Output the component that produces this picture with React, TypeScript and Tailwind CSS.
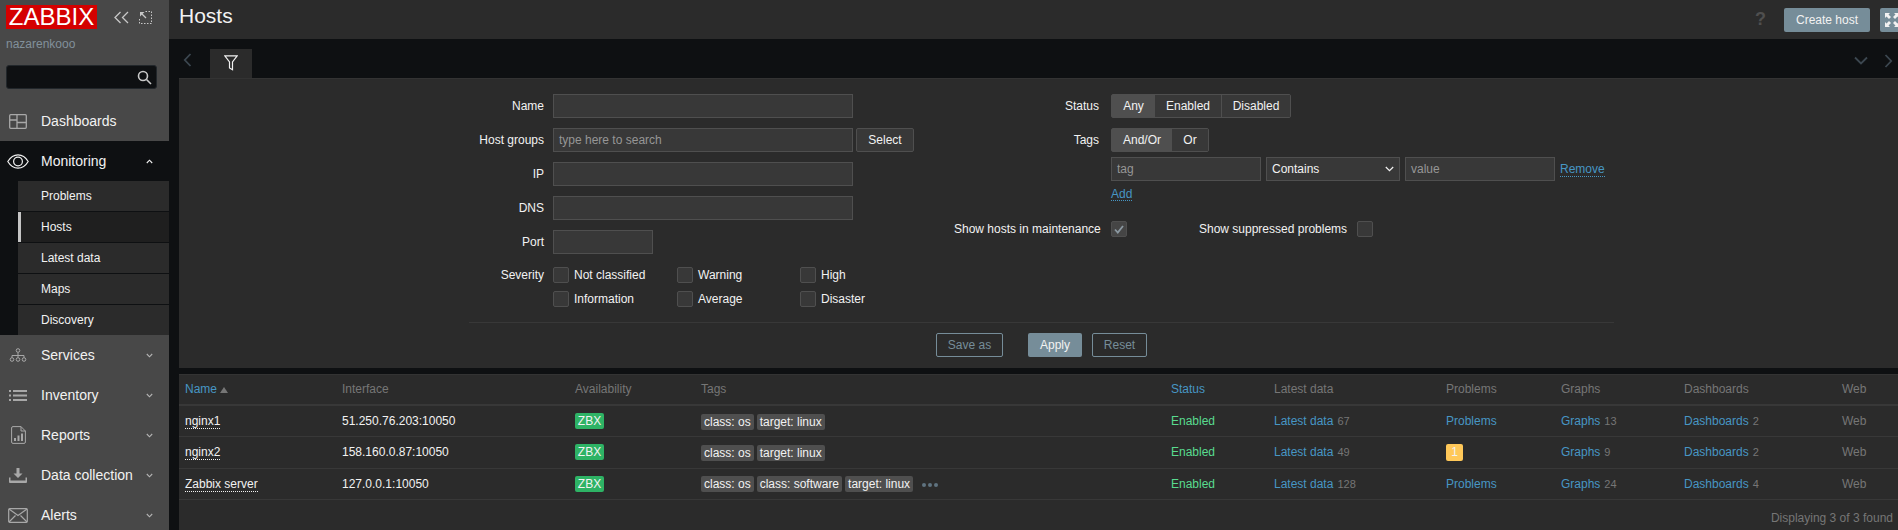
import React from "react";

const c = "#a8a8a8";

const Dash = () => (
  <svg width="18" height="15" viewBox="0 0 18 15" fill="none" stroke={c} strokeWidth="1.300"><rect x="0.700" y="0.700" width="16.600" height="13.600" rx="1" /><path d="M8 .7v13.600M.7 6h7.300M8 8.500h9.300" /></svg>
);
const Eye = () => (
  <svg width="22" height="15" viewBox="0 0 22 15" fill="none" stroke="#f2f2f2" strokeWidth="1.200"><path d="M.8 7.500C3.500 3 7 .8 11 .8s7.500 2.200 10.200 6.700C18.500 12 15 14.200 11 14.200S3.500 12 .8 7.500Z" /><circle cx="11" cy="7.500" r="4.400" /></svg>
);
const Services = () => (
  <svg width="18" height="14" viewBox="0 0 18 14" fill="none" stroke={c} strokeWidth="1"><circle cx="9" cy="2.500" r="1.800" /><path d="M9 4.500v3M3 9.500V7.500h12v2M9 7.500v2" /><circle cx="3" cy="11.500" r="1.800" /><circle cx="9" cy="11.500" r="1.800" /><circle cx="15" cy="11.500" r="1.800" /></svg>
);
const Inventory = () => (
  <svg width="18" height="11" viewBox="0 0 18 11" fill={c}><rect x="0" y="0" width="2" height="2" /><rect x="4" y="0" width="14" height="2" /><rect x="0" y="4.500" width="2" height="2" /><rect x="4" y="4.500" width="14" height="2" /><rect x="0" y="9" width="2" height="2" /><rect x="4" y="9" width="14" height="2" /></svg>
);
const Reports = () => (
  <svg width="15" height="18" viewBox="0 0 15 18" fill="none" stroke={c} strokeWidth="1"><path d="M2 .6h8l4.400 4.400V16a1.400 1.400 0 0 1-1.400 1.400H2A1.400 1.400 0 0 1 .6 16V2A1.400 1.400 0 0 1 2 .6Z" /><path d="M10 .6V5h4.400" /><path d="M3 15v-3h2v3ZM6.500 15V9.500h2V15ZM10 15V7.500h2V15Z" fill={c} stroke="none" /></svg>
);
const DataCol = () => (
  <svg width="18" height="15" viewBox="0 0 18 15" fill={c}><path d="M7.500 0h3v5.500h3L9 10 4.500 5.500h3Z" /><path d="M0 9.500h1.500v3h15v-3H18V14a1 1 0 0 1-1 1H1a1 1 0 0 1-1-1Z" /></svg>
);
const Alerts = () => (
  <svg width="20" height="15" viewBox="0 0 20 15" fill="none" stroke={c} strokeWidth="1.200"><rect x="0.700" y="0.700" width="18.600" height="13.600" rx="1" /><path d="M1 1l9 6.500L19 1M1 14l6.500-6.500M19 14l-6.500-6.500" /></svg>
);
const Chev = ({ up }: { up?: boolean }) => (
  <svg width="7" height="5" viewBox="0 0 7 5" fill="none" stroke={up ? "#f2f2f2" : "#b5b5b5"} strokeWidth="1.100"><path d={up ? "M.8 4 3.500 1.200 6.200 4" : "M.8 1 3.500 3.800 6.200 1"} /></svg>
);

const Main = ({ icon, label, open }: { icon: React.ReactNode; label: string; open?: boolean }) => (
  <div className={`h-10 shrink-0 flex items-center text-[14px] text-[#f2f2f2] ${open ? "bg-[#0e1012]" : ""}`}>
    <span className="w-[41px] pr-[5px] flex justify-center shrink-0">{icon}</span>
    <span className="flex-1">{label}</span>
    {label !== "Dashboards" && <span className="w-[17px] pr-[5px] flex justify-center mt-[1px] shrink-0 mr-[9px]"><Chev up={open} /></span>}
  </div>
);

const Sub = ({ label, active }: { label: string; active?: boolean }) => (
  <div className={`h-[30px] ml-[18px] flex items-center text-[12px] text-[#f2f2f2] ${active ? "bg-[#1f1f1f] border-l-[3px] border-[#c5c5c5] pl-[20px]" : "bg-[#2b2b2b] pl-[23px]"}`}>{label}</div>
);

const Sidebar = () => (
  <aside className="w-[169px] h-[530px] shrink-0 bg-[#484848] flex flex-col overflow-hidden">
    <div className="shrink-0 flex items-center pt-[5px] pl-[6px] h-[24px] box-content">
      <div className="w-[91px] h-6 bg-[#d40000] text-white text-[24px] leading-6 text-center font-normal">ZABBIX</div>
      <svg className="ml-[17px]" width="15" height="13" viewBox="0 0 15 13" fill="none" stroke="#c8c8c8" strokeWidth="1.300"><path d="M6.500 1 1 6.500 6.500 12M14 1 8.500 6.500 14 12" /></svg>
      <svg className="ml-[10px]" width="13" height="13" viewBox="0 0 13 13" fill="none" stroke="#c8c8c8"><path d="M6.500.5h6v12H.5V6.500" strokeDasharray="1.500 1.500" /><path d="M1 1h4.500L1 5.500Z" fill="#c8c8c8" stroke="none" /><path d="M3 3l4 4" strokeWidth="1.300" /></svg>
    </div>
    <div className="shrink-0 pl-[6px] mt-[8px] h-[14px] text-[12px] leading-[14px] text-[#82909b]">nazarenkooo</div>
    <div className="shrink-0 mx-[6px] mt-[14px] h-6 w-[151px] rounded-[3px] bg-[#0e1012] border border-[#22272b] flex items-center justify-end pr-[4px]">
      <svg width="15" height="15" viewBox="0 0 15 15" fill="none" stroke="#c8c8c8" strokeWidth="1.600"><circle cx="6" cy="6" r="4.500" /><path d="m9.500 9.500 4.500 4.500" /></svg>
    </div>
    <div className="shrink-0 mt-[12px]">
      <Main icon={<Dash />} label="Dashboards" />
      <Main icon={<Eye />} label="Monitoring" open />
      <div className="bg-[#0e1012] flex flex-col gap-[1px]">
        <Sub label="Problems" />
        <Sub label="Hosts" active />
        <Sub label="Latest data" />
        <Sub label="Maps" />
        <Sub label="Discovery" />
      </div>
      <Main icon={<Services />} label="Services" />
      <Main icon={<Inventory />} label="Inventory" />
      <Main icon={<Reports />} label="Reports" />
      <Main icon={<DataCol />} label="Data collection" />
      <Main icon={<Alerts />} label="Alerts" />
    </div>
  </aside>
);

const inputCls = "h-6 bg-[#383838] border border-[#4f4f4f] text-[12px] px-[5px] flex items-center shrink-0";

const Row = ({ label, children, h = "h-6" }: { label: string; children?: React.ReactNode; h?: string }) => (
  <div className={`flex items-center ${h}`}>
    <div className="w-[374px] text-right text-[12px] pr-[9px] text-[#f2f2f2] shrink-0">{label}</div>
    {children}
  </div>
);

const Check = ({ checked }: { checked?: boolean }) => (
  <span className={`w-4 h-4 shrink-0 rounded-[2px] border border-[#4f4f4f] flex items-center justify-center ${checked ? "bg-[#454545]" : "bg-[#383838]"}`}>
    {checked && <svg width="10" height="9" viewBox="0 0 10 9" fill="none" stroke="#8b98a1" strokeWidth="1.800"><path d="M1 4.500 3.800 7.500 9 1" /></svg>}
  </span>
);

const Sev = ({ label, w }: { label: string; w: string }) => (
  <span className={`flex items-center gap-[5px] text-[12px] ${w}`}><Check />{label}</span>
);

const Seg = ({ items, widths }: { items: string[]; widths: string[] }) => (
  <div className="flex h-6 border border-[#4f4f4f] rounded-[2px] text-[12px] text-[#f2f2f2]">
    {items.map((t, i) => (
      <span key={t} className={`flex items-center justify-center ${widths[i]} ${i === 0 ? "bg-[#4f4f4f]" : "bg-[#383838]"} ${i > 1 ? "border-l border-[#4f4f4f]" : ""}`}>{t}</span>
    ))}
  </div>
);

const Dotted = ({ children, className = "" }: { children: React.ReactNode; className?: string }) => (
  <span className={`border-b border-dotted leading-[14px] ${className}`}>{children}</span>
);

const FilterPanel = () => (
  <section className="ml-[10px] h-[290px] bg-[#2b2b2b] border-t border-[#333] pt-[15px] text-[#f2f2f2]">
    <div className="flex h-[228px]">
      <div className="w-[775px] shrink-0 flex flex-col gap-[10px]">
        <Row label="Name"><div className={`${inputCls} w-[300px]`} /></Row>
        <Row label="Host groups">
          <div className={`${inputCls} w-[300px] text-[#969696]`}>type here to search</div>
          <div className="ml-[3px] w-[58px] h-6 flex items-center justify-center text-[12px] bg-[#383838] border border-[#4f4f4f] rounded-[2px]">Select</div>
        </Row>
        <Row label="IP"><div className={`${inputCls} w-[300px]`} /></Row>
        <Row label="DNS"><div className={`${inputCls} w-[300px]`} /></Row>
        <Row label="Port"><div className={`${inputCls} w-[100px]`} /></Row>
        <div className="mt-[3px] flex flex-col gap-2">
          <Row label="Severity" h="h-4">
            <Sev label="Not classified" w="w-[124px]" />
            <Sev label="Warning" w="w-[123px]" />
            <Sev label="High" w="w-[80px]" />
          </Row>
          <Row label="" h="h-4">
            <Sev label="Information" w="w-[124px]" />
            <Sev label="Average" w="w-[123px]" />
            <Sev label="Disaster" w="w-[80px]" />
          </Row>
        </div>
      </div>
      <div className="flex-1 flex flex-col text-[12px]">
        <div className="flex items-center h-6">
          <div className="w-[146px] text-right pr-[1px]">Status</div>
          <div className="ml-[11px]"><Seg items={["Any", "Enabled", "Disabled"]} widths={["w-[43px]", "w-[66px]", "w-[69px]"]} /></div>
        </div>
        <div className="flex items-center h-6 mt-[10px]">
          <div className="w-[146px] text-right pr-[1px]">Tags</div>
          <div className="ml-[11px]"><Seg items={["And/Or", "Or"]} widths={["w-[60px]", "w-[36px]"]} /></div>
        </div>
        <div className="flex items-center h-6 mt-[5px] ml-[157px]">
          <div className={`${inputCls} w-[150px] text-[#969696]`}>tag</div>
          <div className={`${inputCls} w-[134px] ml-[5px] justify-between`}>
            Contains
            <svg width="9" height="6" viewBox="0 0 9 6" fill="none" stroke="#f2f2f2" strokeWidth="1.200"><path d="m.8 1 3.700 3.700L8.200 1" /></svg>
          </div>
          <div className={`${inputCls} w-[150px] ml-[5px] text-[#969696]`}>value</div>
          <Dotted className="ml-[5px] text-[#4796c4] border-[#4796c4]">Remove</Dotted>
        </div>
        <div className="ml-[157px] mt-[6px] h-[14px] flex"><Dotted className="text-[#4796c4] border-[#4796c4]">Add</Dotted></div>
        <div className="flex items-center h-4 mt-[20px]">
          <div className="w-[146px] text-right pr-[1px] whitespace-nowrap">Show hosts in maintenance</div>
          <div className="ml-[11px]"><Check checked /></div>
          <span className="ml-[72px] whitespace-nowrap">Show suppressed problems</span>
          <span className="ml-[10px]"><Check /></span>
        </div>
      </div>
    </div>
    <div className="ml-[290px] mr-[284px] border-t border-[#383838] pt-[10px] flex text-[12px]">
      <div className="ml-[467px] flex items-center">
        <span className="w-[67px] h-6 flex items-center justify-center border border-[#768d99] rounded-[2px] text-[#768d99]">Save as</span>
        <span className="ml-[25px] w-[54px] h-6 flex items-center justify-center bg-[#768d99] rounded-[2px] text-[#f2f2f2]">Apply</span>
        <span className="ml-[10px] w-[55px] h-6 flex items-center justify-center border border-[#768d99] rounded-[2px] text-[#768d99]">Reset</span>
      </div>
    </div>
  </section>
);

const Tag = ({ t }: { t: string }) => (
  <span className="inline-block h-[16px] leading-[16px] px-[3px] mr-[3px] bg-[#4f4f4f] rounded-[2px] text-[#f2f2f2] align-middle">{t}</span>
);

const Cnt = ({ n }: { n: string }) => <span className="text-[#767676] text-[11px] ml-[4px]">{n}</span>;
const L = ({ children }: { children: React.ReactNode }) => <span className="text-[#4796c4]">{children}</span>;

const hosts = [
  { name: "nginx1", ip: "51.250.76.203:10050", tags: ["class: os", "target: linux"], ld: "67", prob: 0, g: "13", d: "2", h: "h-[31px]" },
  { name: "nginx2", ip: "158.160.0.87:10050", tags: ["class: os", "target: linux"], ld: "49", prob: 1, g: "9", d: "2", h: "h-[32px]" },
  { name: "Zabbix server", ip: "127.0.0.1:10050", tags: ["class: os", "class: software", "target: linux"], ld: "128", prob: 0, g: "24", d: "4", h: "h-[31px]" },
];

const widths = ["w-[163px]", "w-[233px]", "w-[126px]", "w-[470px]", "w-[103px]", "w-[172px]", "w-[115px]", "w-[123px]", "w-[158px]", ""];
const heads = ["Name", "Interface", "Availability", "Tags", "Status", "Latest data", "Problems", "Graphs", "Dashboards", "Web"];

const HostsTable = () => (
  <section className="ml-[10px] mt-[6px] bg-[#2b2b2b] flex-1 border-t border-[#333] text-[12px] text-[#f2f2f2]">
    <table className="w-full table-fixed border-collapse">
      <colgroup>{widths.map((w, i) => <col key={i} className={w} />)}</colgroup>
      <thead>
        <tr className="h-[30px] border-b-2 border-[#383838]">
          {heads.map((h, i) => (
            <th key={h} className={`text-left font-normal pb-[2px] ${i === 0 ? "pl-[6px]" : ""} ${i === 0 || i === 4 ? "text-[#4796c4]" : "text-[#767676]"}`}>
              {h}
              {i === 0 && <span className="inline-block ml-[3px] w-0 h-0 border-x-[4px] border-x-transparent border-b-[6px] border-b-[#767676]" />}
            </th>
          ))}
        </tr>
      </thead>
      <tbody>
        {hosts.map((r) => (
          <tr key={r.name} className={`${r.h} border-b border-[#383838]`}>
            <td className="pl-[6px]"><Dotted className="border-[#f2f2f2]">{r.name}</Dotted></td>
            <td>{r.ip}</td>
            <td><span className="inline-block w-[29px] h-4 leading-4 text-center bg-[#2eb365] rounded-[2px] text-[#f2f2f2]">ZBX</span></td>
            <td className="whitespace-nowrap">
              {r.tags.map((t) => <Tag key={t} t={t} />)}
              {r.tags.length > 2 && <span className="inline-flex ml-[6px] mt-[2px] gap-[2px] align-middle">{[0, 1, 2].map((i) => <span key={i} className="w-[4px] h-[4px] rounded-full bg-[#5f7380]" />)}</span>}
            </td>
            <td className="text-[#59db8f]">Enabled</td>
            <td><L>Latest data</L><Cnt n={r.ld} /></td>
            <td>{r.prob ? <span className="inline-block w-[17px] h-[17px] leading-[17px] text-center bg-[#ffc859] rounded-[2px] text-[#f2f2f2] align-middle">1</span> : <L>Problems</L>}</td>
            <td><L>Graphs</L><Cnt n={r.g} /></td>
            <td><L>Dashboards</L><Cnt n={r.d} /></td>
            <td className="text-[#767676]">Web</td>
          </tr>
        ))}
      </tbody>
    </table>
    <div className="text-right text-[12px] text-[#767676] pt-[9px] pr-[5px]">Displaying 3 of 3 found</div>
  </section>
);

export default function App() {
  return (
    <div className="w-[1898px] h-[530px] overflow-hidden flex bg-[#0e1012] text-[#f2f2f2]" style={{ fontFamily: '"Liberation Sans", Arial, sans-serif' }}>
      <Sidebar />
      <main className="flex-1 min-w-0 flex flex-col">
        <header className="h-[39px] shrink-0 bg-[#2b2b2b] flex items-center pl-[10px] pb-[7px]">
          <h1 className="flex-1 text-[21px] font-normal leading-6">Hosts</h1>
          <span className="text-[18px] font-bold text-[#4f4f4f] mr-[18px] mt-[7px]">?</span>
          <div className="flex mt-[7px] mr-[-6px]">
            <span className="w-[86px] h-6 bg-[#768d99] rounded-[2px] text-[12px] flex items-center justify-center">Create host</span>
            <span className="ml-[10px] w-6 h-6 bg-[#768d99] rounded-[2px] flex items-center justify-center shrink-0">
              <svg width="14" height="14" viewBox="0 0 14 14" fill="#f2f2f2"><path d="M0 0h5L3.500 1.500 6 4 4 6 1.500 3.500 0 5ZM14 0v5l-1.500-1.500L10 6 8 4l2.500-2.500L9 0ZM0 14V9l1.500 1.500L4 8l2 2-2.500 2.500L5 14ZM14 14H9l1.500-1.500L8 10l2-2 2.500 2.500L14 9Z" /></svg>
            </span>
          </div>
        </header>
        <nav className="h-[39px] shrink-0 flex items-end pl-[5px] pr-[5px]">
          <span className="w-[26px] h-[29px] flex items-center justify-center pb-[7px]">
            <svg width="9" height="14" viewBox="0 0 9 14" fill="none" stroke="#3c4750" strokeWidth="1.800"><path d="M7.500 1 1.800 7l5.700 6" /></svg>
          </span>
          <span className="w-[42px] h-[29px] ml-[10px] bg-[#2b2b2b] flex items-center justify-center pb-[1px]">
            <svg width="14" height="16" viewBox="0 0 14 16" fill="none" stroke="#f2f2f2" strokeWidth="1.200"><path d="M.8.8h12.400L8.500 7v7.800L5.500 13V7Z" /></svg>
          </span>
          <span className="flex-1" />
          <svg className="mb-[13px]" width="14" height="9" viewBox="0 0 14 9" fill="none" stroke="#3c4750" strokeWidth="1.800"><path d="m1 1.500 6 6 6-6" /></svg>
          <svg className="mb-[10px] ml-[16px]" width="9" height="14" viewBox="0 0 9 14" fill="none" stroke="#3c4750" strokeWidth="1.800"><path d="m1.500 1 5.700 6-5.700 6" /></svg>
        </nav>
        <FilterPanel />
        <HostsTable />
      </main>
    </div>
  );
}
